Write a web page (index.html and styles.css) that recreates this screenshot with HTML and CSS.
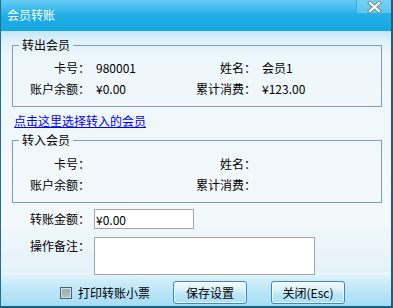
FILE: index.html
```html
<!DOCTYPE html>
<html lang="zh-CN">
<head>
<meta charset="utf-8">
<title>会员转账</title>
<link rel="stylesheet" href="styles.css">
</head>
<body>
<div class="window">
  <div class="titlebar">
    <span class="title">会员转账</span>
    <span class="close">
      <svg width="15" height="12" viewBox="0 0 15 12">
        <path d="M3 2 L12 10 M12 2 L3 10" stroke="#7d8c92" stroke-width="4.2" stroke-linecap="square" fill="none"/>
        <path d="M3 2 L12 10 M12 2 L3 10" stroke="#ffffff" stroke-width="2" stroke-linecap="square" fill="none"/>
      </svg>
    </span>
  </div>
  <div class="body">
    <fieldset class="group group-out">
      <legend>转出会员</legend>
      <div class="info">
        <span class="lbl">卡号：</span><span class="val">980001</span>
        <span class="lbl">姓名：</span><span class="val val-r">会员1</span>
        <span class="lbl">账户余额：</span><span class="val">¥0.00</span>
        <span class="lbl">累计消费：</span><span class="val val-r">¥123.00</span>
      </div>
    </fieldset>
    <div class="pick-row"><a class="pick" href="#">点击这里选择转入的会员</a></div>
    <fieldset class="group group-in">
      <legend>转入会员</legend>
      <div class="info info-in">
        <span class="lbl">卡号：</span><span class="val"></span>
        <span class="lbl">姓名：</span><span class="val val-r"></span>
        <span class="lbl">账户余额：</span><span class="val"></span>
        <span class="lbl">累计消费：</span><span class="val val-r"></span>
      </div>
    </fieldset>
    <div class="form-row row-amount">
      <span class="flabel">转账金额：</span>
      <input class="amount" type="text" value="¥0.00">
    </div>
    <div class="form-row row-note">
      <span class="flabel flabel-top">操作备注：</span>
      <textarea class="note"></textarea>
    </div>
    <div class="footer">
      <span class="check"></span>
      <span class="check-text">打印转账小票</span>
      <button class="btn btn-save">保存设置</button>
      <button class="btn btn-close">关闭(Esc)</button>
    </div>
  </div>
</div>
</body>
</html>
```
FILE: styles.css
```css
* {
  box-sizing: border-box;
}

html, body {
  margin: 0;
  padding: 0;
}

body {
  font-family: "Noto Sans CJK SC", "Noto Sans", sans-serif;
  font-size: 12px;
  color: #000;
  background: #ffffff;
}

.window {
  width: 393px;
  height: 308px;
  display: flex;
  flex-direction: column;
  border-left: 1px solid #236f8e;
  border-right: 2px solid #1c5f7c;
  border-bottom: 2px solid #1c5f7c;
  overflow: hidden;
}

.titlebar {
  height: 31px;
  flex: none;
  display: flex;
  justify-content: space-between;
  align-items: flex-start;
  background: linear-gradient(to bottom, #66cbf2 0px, #48bfef 7px, #22aee6 15px, #15a6e1 31px);
}

.title {
  color: #ffffff;
  font-size: 12px;
  line-height: 14px;
  margin-top: 8px;
  margin-left: 6px;
}

.close {
  width: 35px;
  height: 13px;
  display: flex;
  justify-content: center;
  align-items: flex-start;
  padding-top: 1px;
  padding-left: 1px;
  background: linear-gradient(to bottom, #74d0f3, #5ec7f1);
  border-left: 1px solid #3cafdf;
}

.body {
  flex: 1;
  display: flex;
  flex-direction: column;
  background: linear-gradient(to bottom,
    #c3e7f6 0px,
    #dff1f9 10px,
    #eef7fb 26px,
    #f3f8fb 190px,
    #e3f2f9 241px,
    #eaf7fc 242px,
    #cdedf9 250px,
    #b8e4f7 262px,
    #a6ddf5 275px);
}

.group {
  margin: 8px 9px 0 11px;
  padding: 0;
  min-width: 0;
  border: 1px solid #7f9db9;
}

.group legend {
  font-size: 12px;
  line-height: 12px;
  padding: 0 3px;
  margin-left: 6px;
}

.group-in {
  margin-top: 6px;
}

.info {
  display: grid;
  grid-template-columns: 77px 106px 60px 1fr;
  grid-auto-rows: 14px;
  row-gap: 7px;
  padding: 10px 0 10px 0;
  line-height: 14px;
}

.info-in {
  padding-top: 11px;
}

.lbl {
  text-align: right;
  white-space: nowrap;
}

.val {
  padding-left: 6px;
  white-space: nowrap;
}

.val-r {
  padding-left: 6px;
}

.pick-row {
  margin-top: 7px;
  padding-left: 13px;
  line-height: 14px;
}

.pick {
  color: #0000ff;
  text-decoration: underline;
}

.form-row {
  display: flex;
  align-items: center;
  padding-left: 29px;
}

.row-amount {
  margin-top: 6px;
}

.row-note {
  margin-top: 8px;
  align-items: flex-start;
}

.flabel {
  width: 60px;
  line-height: 14px;
  white-space: nowrap;
}

.flabel-top {
  margin-top: 2px;
}

.amount {
  margin: 0 0 0 4px;
  width: 100px;
  height: 20px;
  border: 1px solid #a2a2a2;
  background: #ffffff;
  padding: 0 0 0 1px;
  font-family: inherit;
  font-size: 12px;
  color: #000;
  outline: none;
}

.note {
  margin: 0 0 0 4px;
  width: 221px;
  height: 38px;
  border: 1px solid #a2a2a2;
  background: #ffffff;
  padding: 1px;
  font-family: inherit;
  font-size: 12px;
  resize: none;
  outline: none;
  display: block;
}

.footer {
  margin-top: 6px;
  height: 23px;
  display: flex;
  align-items: center;
  padding-left: 59px;
}

.check {
  width: 12px;
  height: 12px;
  border: 1px solid #46666f;
  background: linear-gradient(to bottom, #98aeb2, #b0c2c4);
  box-shadow: inset 0 0 0 1px #d3dfe1;
  margin-right: 6px;
  flex: none;
}

.check-text {
  line-height: 14px;
  white-space: nowrap;
}

.btn {
  width: 74px;
  height: 23px;
  padding: 0;
  border: 1px solid #3f87bd;
  border-radius: 3px;
  background: linear-gradient(to bottom, #f3fbfe 0%, #d6f0fb 40%, #bfe7f8 55%, #abdff6 100%);
  box-shadow: inset 0 0 0 1px rgba(255, 255, 255, 0.75);
  font-family: inherit;
  font-size: 12px;
  line-height: 14px;
  color: #000;
  flex: none;
}

.btn-save {
  margin-left: 23px;
}

.btn-close {
  margin-left: 24px;
}
```
